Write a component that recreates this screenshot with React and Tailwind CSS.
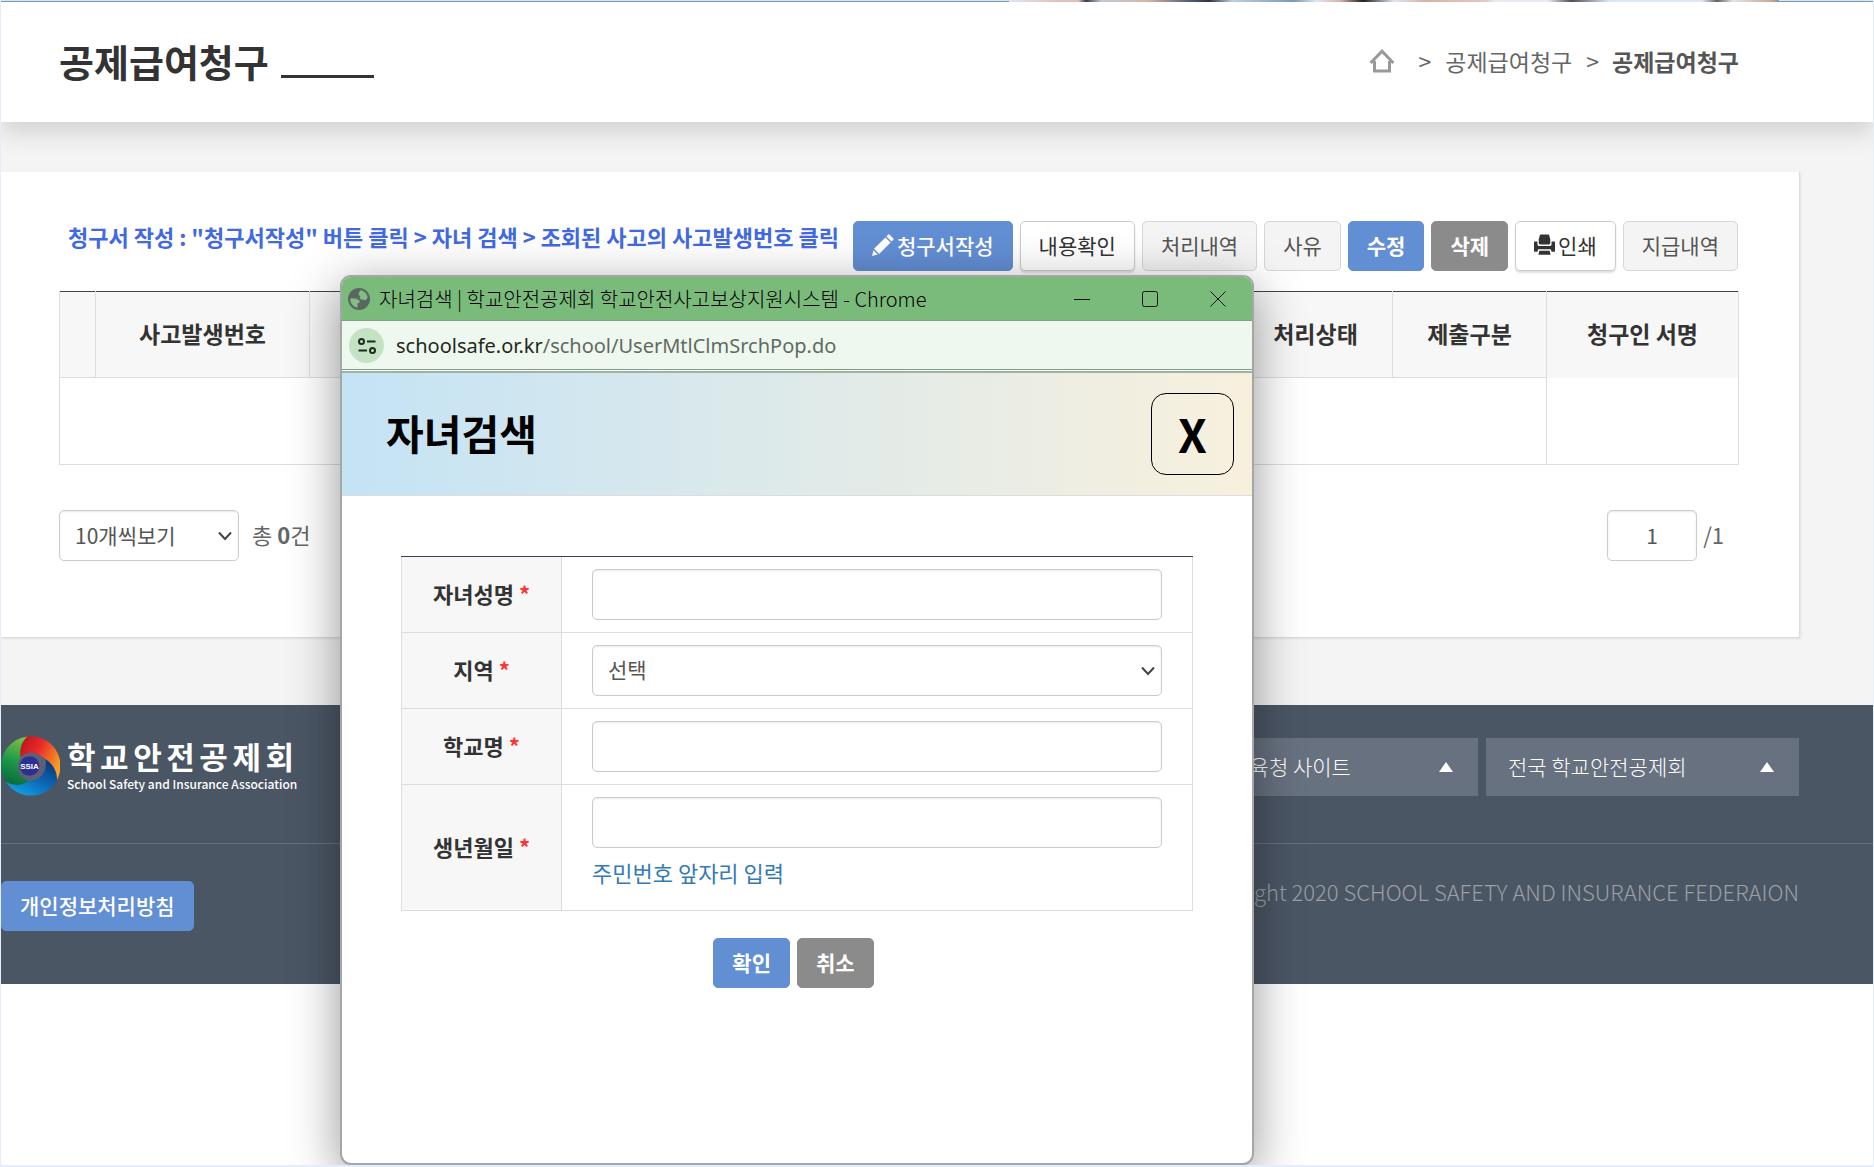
import React from "react";

const CJK = "font-['Noto_Sans_CJK_KR','Noto_Sans_KR',sans-serif]";

const btnBase =
  "inline-flex h-[50px] shrink-0 items-center justify-center gap-[3px] rounded-[5px] border px-[18px] pb-[2px] text-[21px] leading-none whitespace-nowrap";
const btnStyles = {
  primary: "border-[#628ed3] bg-[#628ed3] text-white",
  dark: "border-[#8b8b8b] bg-[#8b8b8b] text-white",
  white: "border-[#ccc] bg-white text-[#333] shadow-[0_2px_2px_rgba(0,0,0,0.12)]",
  muted: "border-[#d6d6d6] bg-[#f4f4f4] text-[#555]",
};

function Btn({ kind, className = "", children }) {
  return (
    <button type="button" className={`${btnBase} ${btnStyles[kind]} ${className}`}>
      {children}
    </button>
  );
}

function PencilIcon() {
  return (
    <svg width="22" height="22" viewBox="0 0 22 22" fill="currentColor" aria-hidden="true">
      <path d="M17.4.6 21.4 4.6Q22 5.2 21.4 5.8L19.6 7.6 14.4 2.4 16.2.6Q16.8 0 17.4.6Z" />
      <path d="M13.4 3.4 18.6 8.6 7.2 20 2 14.8Z" />
      <path d="M1.4 16.2 5.8 20.6 0 22Z" />
    </svg>
  );
}

function PrinterIcon() {
  return (
    <svg width="21" height="22" viewBox="0 0 22 22" fill="currentColor" aria-hidden="true">
      <path d="M7 0h8q.6 0 .8.6L17 5v4q0 1.4-1.4 1.4H6.400Q5 10.400 5 9V5L6.200.6Q6.400 0 7 0Z" />
      <path d="M0 8.200Q0 7.400.8 7.400H3.600V10.600Q3.600 12 5 12H17Q18.400 12 18.400 10.600V7.400H21.200Q22 7.400 22 8.200V17.400Q22 18.200 21.200 18.200H18.400L17.600 15.400H4.400L3.600 18.200H.8Q0 18.200 0 17.400Z" />
      <path d="M5.600 17H16.400L17.400 21.200H4.600Z" />
    </svg>
  );
}

function HomeIcon() {
  return (
    <svg width="26" height="24" viewBox="0 0 26 24" fill="none" stroke="#999" strokeWidth="3" aria-hidden="true">
      <path d="M1.600 14 13 2.200 24.400 14" />
      <path d="M5.500 12V22H20.500V12" />
    </svg>
  );
}

function GlobeIcon() {
  return (
    <svg width="22" height="22" viewBox="0 0 22 22" aria-hidden="true">
      <circle cx="11" cy="11" r="11" fill="#5b6660" />
      <path
        d="M12.500 2.300C16 3 19 5.500 19.700 9.500L17.500 12.500 15 11.500 13 11.500 11.500 9.500 12.500 8 10.500 7 11 4.500Z"
        fill="#83bd86"
      />
      <path
        d="M2.200 10.500 8 10.500 11.500 12.500 11.500 14.500 9.500 15.500 9.500 19.700C5.500 19 2.200 15.500 2.200 10.500Z"
        fill="#83bd86"
      />
    </svg>
  );
}

function TuneIcon() {
  return (
    <svg width="20" height="18" viewBox="0 0 20 18" fill="none" stroke="#1f2a20" strokeWidth="2" aria-hidden="true">
      <circle cx="4.500" cy="4.500" r="2.500" />
      <path d="M10 4.500H18.500" />
      <path d="M1.500 13.500H10" />
      <circle cx="15.500" cy="13.500" r="2.500" />
    </svg>
  );
}

function Emblem() {
  return (
    <svg width="59" height="62" viewBox="0 0 60 62" className="shrink-0" aria-hidden="true">
      <defs>
        <linearGradient id="g-green" x1="0.6" y1="0" x2="0.4" y2="1">
          <stop offset="0" stopColor="#7cc142" />
          <stop offset="0.5" stopColor="#1d9a4a" />
          <stop offset="1" stopColor="#0a6b3b" />
        </linearGradient>
        <linearGradient id="g-red" x1="0" y1="0" x2="1" y2="0.6">
          <stop offset="0" stopColor="#b31319" />
          <stop offset="0.45" stopColor="#e8282a" />
          <stop offset="1" stopColor="#f7a024" />
        </linearGradient>
        <linearGradient id="g-blue" x1="0.9" y1="0" x2="0.2" y2="1">
          <stop offset="0" stopColor="#0d2f74" />
          <stop offset="0.5" stopColor="#0a66b4" />
          <stop offset="1" stopColor="#12a4e6" />
        </linearGradient>
      </defs>
      <circle cx="31" cy="31" r="17" fill="#5d5f78" />
      <path d="M27 1A30 30 0 0 0 5 47Q16 54 29 46C18 44 14 32 20 22Q18 9 27 1Z" fill="url(#g-green)" />
      <path d="M57 45C57 36 53 29 45 24C48 36 40 46 29 46Q16 54 5 47A30 30 0 0 0 57 45Z" fill="url(#g-blue)" />
      <path d="M27 1Q18 9 20 22C28 14 39 18 45 24C53 29 57 36 57 45A30 30 0 0 0 27 1Z" fill="url(#g-red)" />
      <circle cx="29" cy="31" r="10" fill="#2b3192" />
      <text
        x="29"
        y="34"
        textAnchor="middle"
        fill="#fff"
        className="font-['Liberation_Sans',sans-serif] text-[8px] font-bold"
      >
        SSIA
      </text>
    </svg>
  );
}

function Chevron({ className = "" }) {
  return (
    <svg
      width="14"
      height="10"
      viewBox="0 0 14 10"
      fill="none"
      stroke="#444"
      strokeWidth="2"
      className={`pointer-events-none absolute top-1/2 -translate-y-1/2 ${className}`}
      aria-hidden="true"
    >
      <path d="M1 1.500 7 8 13 1.500" />
    </svg>
  );
}

const fieldBase =
  "h-[51px] rounded-[5px] border border-[#ccc] bg-white text-[21px] text-[#555] shadow-[inset_0_1px_2px_rgba(0,0,0,0.09)] outline-none";

function SiteMenu({ label }) {
  return (
    <button
      type="button"
      className="flex h-[58px] w-[313px] items-center justify-between bg-[#687180] pr-[25px] pl-[22px] text-[21px] font-light text-white"
    >
      <span>{label}</span>
      <svg width="14" height="10" viewBox="0 0 14 10" fill="#fff" aria-hidden="true">
        <path d="M7 0 14 10H0Z" />
      </svg>
    </button>
  );
}

function FormRow({ id, label, hint, children }) {
  return (
    <tr>
      <th scope="row" className="w-[161px] border-x border-b border-[#ddd] bg-[#f7f7f7] pb-[3px] text-center text-[22px] font-bold text-[#333]">
        <label htmlFor={id}>
          {label} <span className="text-[#f33]">*</span>
        </label>
      </th>
      <td className="border-r border-b border-[#ddd] px-[30px] pt-[12px] pb-[12px]">
        {children}
        {hint && <p className="pb-[2px] text-[22px] leading-[48px] text-[#337ab7]">{hint}</p>}
      </td>
    </tr>
  );
}

function SearchPopup() {
  return (
    <section
      role="dialog"
      aria-label="자녀검색"
      className="absolute top-[275px] left-[339px] flex h-[890px] w-[914px] flex-col overflow-hidden rounded-[11px] border-2 border-[#a3a8a4] bg-white shadow-[0_12px_50px_rgba(0,0,0,0.42)]"
    >
      <div className="flex h-[43px] shrink-0 items-center bg-[#7abb7c] pl-[6px] text-[20px] font-light text-black">
        <GlobeIcon />
        <span className="ml-[9px] whitespace-nowrap">자녀검색 | 학교안전공제회 학교안전사고보상지원시스템 - Chrome</span>
        <div className="mr-[26px] ml-auto flex items-center gap-[52px]">
          <button type="button" aria-label="최소화">
            <svg width="16" height="16" viewBox="0 0 16 16" stroke="#111" className="block">
              <path d="M0 8.500H16" />
            </svg>
          </button>
          <button type="button" aria-label="최대화">
            <svg width="16" height="16" viewBox="0 0 16 16" stroke="#111" fill="none" className="block">
              <rect x="0.5" y="0.5" width="15" height="15" rx="2" />
            </svg>
          </button>
          <button type="button" aria-label="닫기">
            <svg width="16" height="16" viewBox="0 0 16 16" stroke="#111" className="block">
              <path d="M.5.5 15.500 15.500M15.500.5.5 15.500" />
            </svg>
          </button>
        </div>
      </div>
      <div className="flex h-[50px] shrink-0 items-center border-y border-[#7f9e86] bg-[#eff8ef] pt-px pl-[7px]">
        <span className="flex size-[35px] items-center justify-center rounded-full bg-[#c4e3c5]">
          <TuneIcon />
        </span>
        <span className="ml-[12px] font-['Noto_Sans',sans-serif] text-[20px] text-[#5f6b62]">
          <span className="text-[#1f2a20]">schoolsafe.or.kr</span>/school/UserMtlClmSrchPop.do
        </span>
      </div>
      <header className="mt-px flex h-[125px] shrink-0 items-center justify-between border-t-2 border-b border-t-[#9fb3a3] border-b-[#ddd] bg-gradient-to-r from-[#c4e3f5] to-[#f8f0dd] pr-[18px] pl-[44px]">
        <h2 className="pb-[3px] text-[41px] leading-none font-bold text-black">자녀검색</h2>
        <button
          type="button"
          aria-label="창 닫기"
          className="h-[82px] w-[83px] rounded-[15px] border border-black pb-[2px] text-[46px] leading-none font-bold text-black"
        >
          X
        </button>
      </header>
      <form className="px-[59px] pt-[60px]" onSubmit={(e) => e.preventDefault()}>
        <table className="w-full border-separate border-spacing-0 border-t border-[#3c3f4f]">
          <tbody>
            <FormRow id="child-name" label="자녀성명">
              <input id="child-name" type="text" className={`${fieldBase} block w-full px-4`} />
            </FormRow>
            <FormRow id="region" label="지역">
              <div className="relative">
                <select id="region" className={`${fieldBase} block w-full appearance-none px-[15px] pb-[2px]`}>
                  <option>선택</option>
                </select>
                <Chevron className="right-[7px]" />
              </div>
            </FormRow>
            <FormRow id="school" label="학교명">
              <input id="school" type="text" className={`${fieldBase} block w-full px-4`} />
            </FormRow>
            <FormRow id="birth" label="생년월일" hint="주민번호 앞자리 입력">
              <input id="birth" type="text" className={`${fieldBase} block w-full px-4`} />
            </FormRow>
          </tbody>
        </table>
        <div className="mt-[27px] flex justify-center gap-[7px] pr-[7px]">
          <Btn kind="primary" className="font-bold">확인</Btn>
          <Btn kind="dark" className="font-bold">취소</Btn>
        </div>
      </form>
    </section>
  );
}

export default function App() {
  return (
    <div className={`relative flex min-h-screen flex-col overflow-hidden border-x border-b-2 border-[#e3eefa] bg-white text-[22px] ${CJK}`}>
      <div className="flex h-[2px] justify-end border-b border-[#7d9dbb] bg-[#dcebf8] pr-[94px]">
        <div className="h-[2px] w-[770px] shrink-0 bg-[linear-gradient(90deg,#e3eefa_0%,#e8c8c0_6%,#e8c8c0_9%,#3a3a44_10%,#c8d0e0_12%,#e0b8a8_18%,#5b6a80_23%,#33363f_26%,#c4d4e6_29%,#7d9dbb_37%,#e3eefa_40%,#e0b8a8_43%,#222_46%,#e3eefa_50%,#dcb8a8_54%,#e8cfc8_62%,#f0eef8_63%,#f0eef8_70%,#55545c_73%,#e3eef6_78%,#e3eef6_90%,#6a6264_92%,#e3eef6_94%,#d8a890_99%,#7d9dbb_100%)]" />
      </div>
      <div className="bg-[#f4f4f4] pb-[67px]">
        <header className="flex h-[120px] items-center justify-between bg-white pr-[134px] pb-[2px] pl-[58px] shadow-[0_10px_24px_rgba(0,0,0,0.15)]">
          <div className="flex items-end gap-[12px]">
            <h1 className="pb-px text-[38px] leading-[44px] font-bold text-[#333]">공제급여청구</h1>
            <span className="mb-[6px] h-[3px] w-[93px] bg-[#333]" />
          </div>
          <nav className="flex items-center text-[23px] text-[#666]" aria-label="위치">
            <a href="#home" aria-label="홈">
              <HomeIcon />
            </a>
            <span className="ml-[24px]">&gt;</span>
            <a href="#claim" className="mx-[14px]">공제급여청구</a>
            <span className="mr-[13px]">&gt;</span>
            <strong className="font-bold text-[#555]">공제급여청구</strong>
          </nav>
        </header>

        <main className="mt-[50px] mr-[73px] h-[466px] border-r border-b border-[#dcdcdc] bg-white pt-[49px] pr-[60px] pl-[58px] shadow-[1px_1px_2px_rgba(0,0,0,0.08)]">
          <div className="flex items-start justify-between">
            <p className="pl-[9px] leading-[30px] font-bold whitespace-nowrap text-[#4169e1]">
              청구서 작성 : "청구서작성" 버튼 클릭 &gt; 자녀 검색 &gt; 조회된 사고의 사고발생번호 클릭
            </p>
            <div className="flex gap-[7px] pr-px">
              <Btn kind="primary" className="font-medium"><PencilIcon />청구서작성</Btn>
              <Btn kind="white">내용확인</Btn>
              <Btn kind="muted">처리내역</Btn>
              <Btn kind="muted">사유</Btn>
              <Btn kind="primary" className="font-bold">수정</Btn>
              <Btn kind="dark" className="font-bold">삭제</Btn>
              <Btn kind="white"><PrinterIcon />인쇄</Btn>
              <Btn kind="muted">지급내역</Btn>
            </div>
          </div>

          <table className="mt-[20px] w-full table-fixed border-collapse border-t border-[#3d4550] text-[#333]">
            <colgroup>
              <col className="w-[36px]" />
              <col className="w-[214px]" />
              <col />
              <col className="w-[154px]" />
              <col className="w-[154px]" />
              <col className="w-[192px]" />
            </colgroup>
            <thead>
              <tr className="h-[86px] bg-[#f7f7f7] text-[23px] [&>th]:pb-[3px]">
                <td className="border border-t-0 border-[#ddd]" />
                <th className="border border-t-0 border-[#ddd] font-bold">사고발생번호</th>
                <td className="border border-t-0 border-[#ddd]" />
                <th className="border border-t-0 border-[#ddd] font-bold">처리상태</th>
                <th className="border border-t-0 border-[#ddd] font-bold">제출구분</th>
                <th className="border-x border-[#ddd] font-bold">청구인 서명</th>
              </tr>
            </thead>
            <tbody>
              <tr className="h-[87px]">
                <td colSpan={5} className="border border-[#ddd]" />
                <td className="border border-t-0 border-[#ddd]" />
              </tr>
            </tbody>
          </table>

          <div className="mt-[45px] flex items-center text-[#666]">
            <div className="relative">
              <select aria-label="목록 개수" className={`${fieldBase} block w-[180px] appearance-none px-[15px]`}>
                <option>10개씩보기</option>
              </select>
              <Chevron className="right-[7px]" />
            </div>
            <span className="ml-[13px] pb-[2px]">
              총 <b>0</b>건
            </span>
            <div className="mr-[15px] ml-auto flex items-center gap-[6px]">
              <input aria-label="페이지" type="text" defaultValue="1" className={`${fieldBase} w-[90px] pb-[2px] text-center`} />
              <span className="pb-[2px]">/1</span>
            </div>
          </div>
        </main>
      </div>

      <footer className="h-[279px] bg-[#4b5665]">
        <div className="flex h-[139px] items-start justify-between border-b border-[#657080] pr-[74px]">
          <a href="#main" className="flex items-center gap-[7px] pt-[30px] text-white">
            <Emblem />
            <span className="flex flex-col">
              <span className="flex w-[227px] justify-between text-[31px] leading-[35px] font-bold">
                {["학", "교", "안", "전", "공", "제", "회"].map((c) => (
                  <span key={c}>{c}</span>
                ))}
              </span>
              <span className="text-[12px] leading-[21px] font-medium whitespace-nowrap">School Safety and Insurance Association</span>
            </span>
          </a>
          <div className="flex gap-[8px] pt-[33px]">
            <SiteMenu label="시도 교육청 사이트" />
            <SiteMenu label="전국 학교안전공제회" />
          </div>
        </div>
        <div className="flex items-start justify-between pt-[37px] pr-[74px]">
          <Btn kind="primary" className="font-medium">개인정보처리방침</Btn>
          <p className="leading-[20px] font-light text-[#9c9fa4]">Copyright 2020 SCHOOL SAFETY AND INSURANCE FEDERAION</p>
        </div>
      </footer>

      <SearchPopup />
    </div>
  );
}
